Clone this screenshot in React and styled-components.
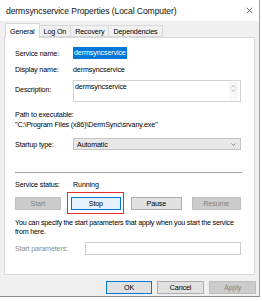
import React from 'react';
import styled, { createGlobalStyle } from 'styled-components';

const Global = createGlobalStyle`
  html, body { margin: 0; padding: 0; background: #ffffff; }
  body {
    font-family: "Liberation Sans", Arial, sans-serif;
    font-size: 7.2px;
    letter-spacing: -0.15px;
    color: #000;
  }
  * { box-sizing: border-box; }
`;

const Window = styled.div`
  width: 260px;
  height: 297px;
  background: #f0f0f0;
  border-right: 1px solid #a0a0a0;
  border-bottom: 1px solid #8a8a8a;
  display: flex;
  flex-direction: column;
`;

const TitleBar = styled.div`
  height: 21px;
  background: #ffffff;
  display: flex;
  align-items: center;
  justify-content: space-between;
  padding: 0 6px 0 6px;
  font-size: 8.6px;
  letter-spacing: -0.1px;
  color: #111;
`;

const TabStrip = styled.div`
  display: flex;
  align-items: flex-end;
  height: 15px;
  padding-left: 5px;
  margin-top: 1px;
`;

const Tab = styled.div`
  height: ${p => (p.$active ? '15px' : '12px')};
  padding: 0 4px;
  display: flex;
  align-items: center;
  background: ${p => (p.$active ? '#ffffff' : '#f0f0f0')};
  border: 1px solid #d9d9d9;
  border-bottom: ${p => (p.$active ? 'none' : '1px solid #d9d9d9')};
  margin-left: ${p => (p.$first ? '0' : '-1px')};
  position: relative;
  z-index: ${p => (p.$active ? 2 : 1)};
  margin-bottom: ${p => (p.$active ? '-1px' : '0')};
`;

const Panel = styled.div`
  margin: 0 4px;
  height: 238px;
  background: #ffffff;
  border: 1px solid #d9d9d9;
  display: flex;
  flex-direction: column;
  padding: 0 13px 0 10px;
`;

const Row = styled.div`
  display: flex;
  align-items: ${p => (p.$top ? 'flex-start' : 'center')};
  height: ${p => p.$h}px;
  margin-top: ${p => p.$mt}px;
`;

const Label = styled.div`
  width: ${p => p.$w || 58}px;
  flex-shrink: 0;
  color: ${p => (p.$dim ? '#8a8a8a' : '#000')};
  padding-top: ${p => p.$pt || 0}px;
`;

const Line = styled.div`
  height: ${p => p.$h || 10}px;
  line-height: ${p => p.$h || 10}px;
  margin-top: ${p => p.$mt || 0}px;
  white-space: nowrap;
`;

const Selected = styled.span`
  background: #0078d7;
  color: #ffffff;
  padding: 1px 1px;
  line-height: 10px;
`;

const TextBox = styled.div`
  flex: 1;
  height: 100%;
  border: 1px solid #d3d3d3;
  background: #ffffff;
  display: flex;
  justify-content: space-between;
  padding: 1px 0 0 1px;
`;

const ScrollCol = styled.div`
  width: 9px;
  display: flex;
  flex-direction: column;
  align-items: center;
  gap: 1px;
  padding-top: 3px;
  background: #f7f7f7;
  margin: 0 2px 2px 0;
`;

const Select = styled.div`
  flex: 1;
  height: 100%;
  border: 1px solid #c4c4c4;
  background: #e8e8e8;
  display: flex;
  align-items: center;
  justify-content: space-between;
  padding: 0 4px 0 3px;
`;

const Separator = styled.div`
  height: 1px;
  background: #a8a8a8;
  margin-top: ${p => p.$mt}px;
  margin-right: -1px;
`;

const ButtonRow = styled.div`
  display: flex;
  height: 13px;
  margin-top: ${p => p.$mt}px;
  gap: ${p => p.$gap}px;
`;

const Button = styled.div`
  width: ${p => p.$w || 48}px;
  height: 100%;
  display: flex;
  align-items: center;
  justify-content: center;
  background: ${p => (p.$disabled ? '#cccccc' : p.$focus ? '#e5f1fb' : '#e1e1e1')};
  border: 1px solid ${p => (p.$disabled ? '#bfbfbf' : p.$focus || p.$default ? '#0078d7' : '#adadad')};
  color: ${p => (p.$disabled ? '#838383' : '#000')};
  position: relative;
`;

const Highlight = styled.div`
  position: absolute;
  left: -5px;
  right: -4px;
  top: -6px;
  bottom: -5px;
  border: 1.5px solid #e0312b;
  pointer-events: none;
`;

const Paragraph = styled.div`
  margin-top: ${p => p.$mt}px;
  line-height: 9px;
  width: 228px;
  letter-spacing: -0.22px;
`;

const Input = styled.div`
  flex: 1;
  height: 100%;
  border: 1px solid #cccccc;
  background: #ffffff;
`;

const Footer = styled.div`
  display: flex;
  justify-content: flex-end;
  gap: 5px;
  padding-right: 3px;
  margin-top: 6px;
  height: 13px;
`;

const Chevron = ({ up, size = 5, color = '#9a9a9a' }) => (
  <svg width={size} height={size * 0.6} viewBox="0 0 10 6">
    <path d={up ? 'M1 5 L5 1 L9 5' : 'M1 1 L5 5 L9 1'} fill="none" stroke={color} strokeWidth="1.3" />
  </svg>
);

const CloseIcon = () => (
  <svg width="7" height="7" viewBox="0 0 10 10">
    <path d="M1 1 L9 9 M9 1 L1 9" stroke="#333" strokeWidth="1" />
  </svg>
);

export default function App() {
  return (
    <>
      <Global />
      <Window>
        <TitleBar>
          <span>dermsyncservice Properties (Local Computer)</span>
          <CloseIcon />
        </TitleBar>
        <TabStrip>
          <Tab $active $first>General</Tab>
          <Tab>Log On</Tab>
          <Tab>Recovery</Tab>
          <Tab>Dependencies</Tab>
        </TabStrip>
        <Panel>
          <Row $h={12} $mt={9}>
            <Label>Service name:</Label>
            <Selected>dermsyncservice</Selected>
          </Row>
          <Row $h={12} $mt={4}>
            <Label>Display name:</Label>
            <span>dermsyncservice</span>
          </Row>
          <Row $h={22} $mt={5} $top>
            <Label $pt={5}>Description:</Label>
            <TextBox>
              <span>dermsyncservice</span>
              <ScrollCol>
                <Chevron up />
                <Chevron />
              </ScrollCol>
            </TextBox>
          </Row>
          <Line $mt={8}>Path to executable:</Line>
          <Line>"C:\Program Files (x86)\DermSync\srvany.exe"</Line>
          <Row $h={12} $mt={8}>
            <Label>Startup type:</Label>
            <Select>
              <span>Automatic</span>
              <Chevron size={5} color="#555" />
            </Select>
          </Row>
          <Separator $mt={22} />
          <Row $h={10} $mt={6}>
            <Label>Service status:</Label>
            <span>Running</span>
          </Row>
          <ButtonRow $mt={8} $gap={10}>
            <Button $disabled>Start</Button>
            <Button $focus $w={53}>
              Stop
              <Highlight />
            </Button>
            <Button $w={53}>Pause</Button>
            <Button $disabled $w={52}>Resume</Button>
          </ButtonRow>
          <Paragraph $mt={8}>
            You can specify the start parameters that apply when you start the service from here.
          </Paragraph>
          <Row $h={13} $mt={6}>
            <Label $dim $w={70}>Start parameters:</Label>
            <Input />
          </Row>
        </Panel>
        <Footer>
          <Button $default $w={46}>OK</Button>
          <Button $w={47}>Cancel</Button>
          <Button $disabled $w={47}>Apply</Button>
        </Footer>
      </Window>
    </>
  );
}
